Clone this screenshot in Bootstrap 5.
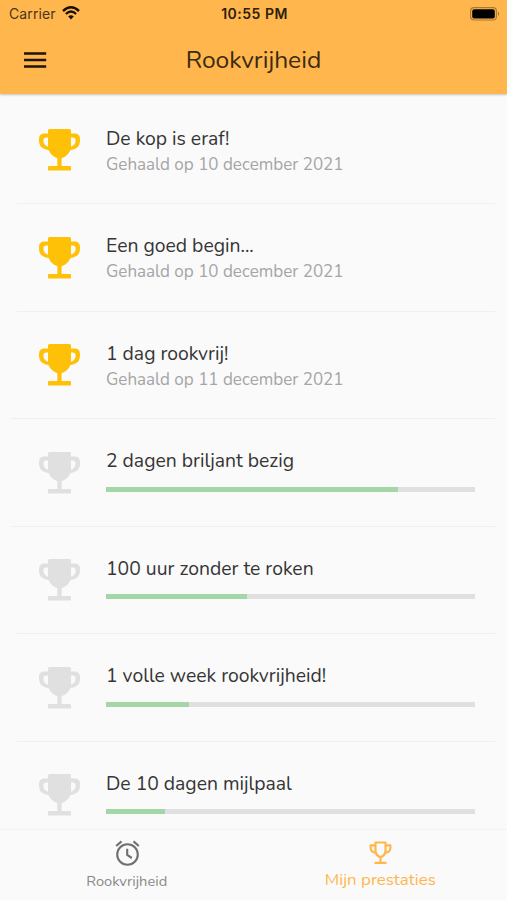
<!DOCTYPE html>
<html lang="nl">
<head>
<meta charset="utf-8">
<meta name="viewport" content="width=device-width, initial-scale=1">
<title>Rookvrijheid</title>
<link href="https://cdn.jsdelivr.net/npm/bootstrap@5.3.0/dist/css/bootstrap.min.css" rel="stylesheet">
<style>
body{font-family:Nunito,Lato,sans-serif;background:#fafafa;color:#353535;height:900px;overflow:hidden}
.top{background:#ffb74d;height:94px;color:#3b2a12;box-shadow:0 1px 2px rgba(0,0,0,.22);z-index:2}
.status{height:27px;padding:0 7px 0 9px;font:14px/27px Inter,sans-serif;color:#2c200e}
.status .side{flex:1 1 0}
.carrier{letter-spacing:.1px;color:#49351a}
.wifi{margin:-2px 0 0 6px}
.clock{font-weight:600;letter-spacing:.5px}
.apptitle{font-size:24.6px;line-height:66px}
.bar{height:66px;padding:0 23px}
.bar .side{width:24px}
.entries{padding-top:2px}
.entry{height:107.5px;padding:32px 32px 0 39px}
.entry::after{content:"";position:absolute;left:17px;right:12px;bottom:-.5px;height:1px;background:#efefef}
.entry.wide::after{left:11px}
.cup{width:41px;height:42px;margin:1px 26px 0 0;color:#ffc107}
.open .cup{color:#e0e0e0}
.label{font-size:19.35px;line-height:24px;height:24px;white-space:nowrap;margin-top:-1.4px}
.when{font-size:17.03px;line-height:24px;color:#a5a5a5;white-space:nowrap;margin-top:2px}
.progress{height:5px;border-radius:0;background:#e0e0e0;margin-top:13.4px}
.progress-bar{background:#a5d6a7}
.tabs{height:71px;background:#fafafa;border-top:1px solid #f3f3f3;z-index:2}
.tab{color:#888;font-size:14.7px;line-height:20px;padding-top:9px}
.tab.active{color:#ffb74d;font-size:16.9px}
.tab span{margin-top:4px}
.tab.active span{margin-top:3px}
</style>
<script src="https://cdn.jsdelivr.net/npm/bootstrap@5.3.0/dist/js/bootstrap.bundle.min.js"></script>
</head>
<body class="d-flex flex-column">
<svg class="d-none"><symbol id="cup" viewBox="0 0 41 42"><path fill="currentColor" d="M10.500 0H30.500Q32 0 32 1.500V4.500H35.500Q41 4.500 41 10V11.500Q41 17.500 36.500 19.500Q34.500 20.600 31.500 21Q28.500 27.500 22.600 29.300V37H31Q32 37 32 38V41.500H9V38Q9 37 10 37H18.400V29.300Q12.500 27.500 9.500 21Q6.500 20.600 4.500 19.500Q0 17.500 0 11.500V10Q0 4.500 5.500 4.500H9V1.500Q9 0 10.500 0ZM9 8.500H6.800Q4.400 8.500 4.400 11V11.500Q4.400 16 9 17.800ZM32 8.500V17.800Q36.600 16 36.600 11.500V11Q36.600 8.500 34.200 8.500Z"/></symbol></svg>
<header class="top position-relative flex-shrink-0">
<div class="status d-flex align-items-center">
<div class="side d-flex align-items-center"><span class="carrier">Carrier</span><svg class="wifi" width="18" height="14" viewBox="0 0 18 14" fill="none" stroke="#17110a" stroke-width="2.400"><path d="M1 5Q9-2.300 17 5M3.900 8Q9 3.200 14.100 8"/><path d="M9 13.400 6.200 10.500Q9 8.200 11.800 10.500Z" fill="#17110a" stroke="none"/></svg></div>
<span class="clock">10:55 PM</span>
<div class="side d-flex justify-content-end"><svg width="30" height="14" viewBox="0 0 30 14"><rect x=".6" y=".6" width="25.800" height="12.400" rx="3.500" fill="none" stroke="#a87933" stroke-width="1.200"/><rect x="2.200" y="2.200" width="22.600" height="9.200" rx="2" fill="#000"/><path d="M28 4.500Q30 6.800 28 9Z" fill="#8c652b"/></svg></div>
</div>
<div class="bar d-flex justify-content-between align-items-center">
<div class="side"><svg class="d-block" width="24" height="16" viewBox="0 0 24 16"><path d="M1 1.500H23.200M1 8H23.200M1 14.500H23.200" stroke="#1c150a" stroke-width="2.600"/></svg></div>
<div class="apptitle">Rookvrijheid</div><div class="side"></div>
</div>
</header>
<main class="entries flex-grow-1 overflow-hidden">
<div class="entry d-flex position-relative"><svg class="cup flex-shrink-0"><use href="#cup"/></svg><div><div class="label">De kop is eraf!</div><div class="when">Gehaald op 10 december 2021</div></div></div>
<div class="entry d-flex position-relative"><svg class="cup flex-shrink-0"><use href="#cup"/></svg><div><div class="label">Een goed begin...</div><div class="when">Gehaald op 10 december 2021</div></div></div>
<div class="entry wide d-flex position-relative"><svg class="cup flex-shrink-0"><use href="#cup"/></svg><div><div class="label">1 dag rookvrij!</div><div class="when">Gehaald op 11 december 2021</div></div></div>
<div class="entry open wide d-flex position-relative"><svg class="cup flex-shrink-0"><use href="#cup"/></svg><div class="flex-grow-1"><div class="label">2 dagen briljant bezig</div><div class="progress"><div class="progress-bar" style="width:79.2%"></div></div></div></div>
<div class="entry open d-flex position-relative"><svg class="cup flex-shrink-0"><use href="#cup"/></svg><div class="flex-grow-1"><div class="label">100 uur zonder te roken</div><div class="progress"><div class="progress-bar" style="width:38.1%"></div></div></div></div>
<div class="entry open d-flex position-relative"><svg class="cup flex-shrink-0"><use href="#cup"/></svg><div class="flex-grow-1"><div class="label">1 volle week rookvrijheid!</div><div class="progress"><div class="progress-bar" style="width:22.6%"></div></div></div></div>
<div class="entry open d-flex position-relative"><svg class="cup flex-shrink-0"><use href="#cup"/></svg><div class="flex-grow-1"><div class="label">De 10 dagen mijlpaal</div><div class="progress"><div class="progress-bar" style="width:16%"></div></div></div></div>
</main>
<nav class="tabs d-flex position-relative flex-shrink-0">
<div class="tab w-50 d-flex flex-column align-items-center"><svg class="flex-shrink-0" width="26" height="28" viewBox="0 0 26 28" fill="none" stroke="#707070" stroke-width="2.100"><circle cx="13.500" cy="15.500" r="10.300"/><path d="M2.200 7 7.500 2.400M24.800 7 19.500 2.400"/><path d="M13.200 9.700V16L17.800 19"/></svg><span>Rookvrijheid</span></div>
<div class="tab active w-50 d-flex flex-column align-items-center"><svg class="flex-shrink-0" width="24" height="28" viewBox="0 0 24 28" fill="none" stroke="currentColor" stroke-width="2.200"><path d="M7.500 3.500H17.500V12.500Q17 16.500 12.500 18.200Q8 16.500 7.500 12.500ZM7.500 6.300H2.600V8.800Q2.600 13.300 8 14M17.500 6.300H22.400V8.800Q22.400 13.300 17 14M12.500 18V24M6.500 23.800H18.500" stroke-linejoin="round"/></svg><span>Mijn prestaties</span></div>
</nav>
</body>
</html>
